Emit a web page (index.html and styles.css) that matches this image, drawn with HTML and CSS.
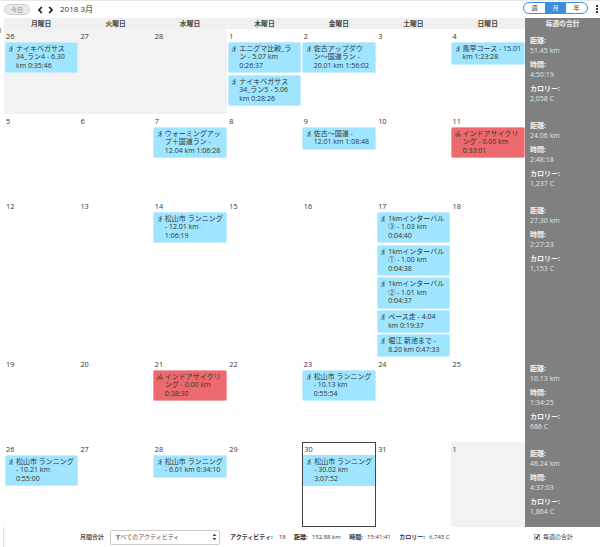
FILE: index.html
```html
<!DOCTYPE html>
<html lang="ja">
<head>
    <meta charset="UTF-8">
    <title>カレンダー</title>
    <link rel="stylesheet" href="styles.css">
</head>
<body>
    <div class="grip"></div>
    <div class="toolbar">
        <button class="today-btn">今日</button>
        <div class="nav">
            <svg width="6" height="8" viewBox="0 0 6 8"><path d="M4.800 1L2 4l2.800 3" fill="none" stroke="#222" stroke-width="1.800"/></svg>
            <svg width="6" height="8" viewBox="0 0 6 8"><path d="M1.200 1L4 4 1.200 7" fill="none" stroke="#222" stroke-width="1.800"/></svg>
        </div>
        <span class="month">2018 3月</span>
        <div class="views">
            <span>週</span>
            <span class="on">月</span>
            <span>年</span>
        </div>
        <div class="dots"><i></i><i></i><i></i></div>
    </div>

    <div class="calendar">
        <div class="week head">
            <div>月曜日</div><div>火曜日</div><div>水曜日</div><div>木曜日</div><div>金曜日</div><div>土曜日</div><div>日曜日</div>
            <div class="side-title">毎週の合計</div>
        </div>

        <div class="week">
            <div class="day off">26
                <div class="event run"><svg class="ico"><use href="#run"/></svg><p>ナイキベガサス<br>34_ラン4 - 6.30<br>km 0:35:46</p></div>
            </div>
            <div class="day off">27</div>
            <div class="day off">28</div>
            <div class="day">1
                <div class="event run"><svg class="ico"><use href="#run"/></svg><p>エニグマ比較_ラ<br>ン - 5.07 km<br>0:26:37</p></div>
                <div class="event run"><svg class="ico"><use href="#run"/></svg><p>ナイキベガサス<br>34_ラン5 - 5.06<br>km 0:28:26</p></div>
            </div>
            <div class="day">2
                <div class="event run"><svg class="ico"><use href="#run"/></svg><p>佐古アップダウ<br>ン〜国道ラン -<br>20.01 km 1:56:02</p></div>
            </div>
            <div class="day">3</div>
            <div class="day">4
                <div class="event run"><svg class="ico"><use href="#run"/></svg><p>風早コース - 15.01<br>km 1:23:28</p></div>
            </div>
            <div class="total">
                <b>距離:</b><span>51.45 km</span>
                <b>時間:</b><span>4:50:19</span>
                <b>カロリー:</b><span>2,058 C</span>
            </div>
        </div>

        <div class="week">
            <div class="day">5</div>
            <div class="day">6</div>
            <div class="day">7
                <div class="event run"><svg class="ico"><use href="#run"/></svg><p>ウォーミングアッ<br>プ＋国道ラン -<br>12.04 km 1:06:28</p></div>
            </div>
            <div class="day">8</div>
            <div class="day">9
                <div class="event run"><svg class="ico"><use href="#run"/></svg><p>佐古〜国道 -<br>12.01 km 1:08:48</p></div>
            </div>
            <div class="day">10</div>
            <div class="day">11
                <div class="event bike"><svg class="ico"><use href="#bike"/></svg><p>インドアサイクリ<br>ング - 0.00 km<br>0:33:01</p></div>
            </div>
            <div class="total">
                <b>距離:</b><span>24.06 km</span>
                <b>時間:</b><span>2:48:18</span>
                <b>カロリー:</b><span>1,237 C</span>
            </div>
        </div>

        <div class="week tall">
            <div class="day">12</div>
            <div class="day">13</div>
            <div class="day">14
                <div class="event run"><svg class="ico"><use href="#run"/></svg><p>松山市 ランニング<br>- 12.01 km<br>1:06:19</p></div>
            </div>
            <div class="day">15</div>
            <div class="day">16</div>
            <div class="day">17
                <div class="event run"><svg class="ico"><use href="#run"/></svg><p>1kmインターバル<br>③ - 1.03 km<br>0:04:40</p></div>
                <div class="event run"><svg class="ico"><use href="#run"/></svg><p>1kmインターバル<br>① - 1.00 km<br>0:04:38</p></div>
                <div class="event run"><svg class="ico"><use href="#run"/></svg><p>1kmインターバル<br>② - 1.01 km<br>0:04:37</p></div>
                <div class="event run"><svg class="ico"><use href="#run"/></svg><p>ペース走 - 4.04<br>km 0:19:37</p></div>
                <div class="event run"><svg class="ico"><use href="#run"/></svg><p>堀江 新池まで -<br>8.20 km 0:47:33</p></div>
            </div>
            <div class="day">18</div>
            <div class="total">
                <b>距離:</b><span>27.30 km</span>
                <b>時間:</b><span>2:27:23</span>
                <b>カロリー:</b><span>1,153 C</span>
            </div>
        </div>

        <div class="week">
            <div class="day">19</div>
            <div class="day">20</div>
            <div class="day">21
                <div class="event bike"><svg class="ico"><use href="#bike"/></svg><p>インドアサイクリ<br>ング - 0.00 km<br>0:38:30</p></div>
            </div>
            <div class="day">22</div>
            <div class="day">23
                <div class="event run"><svg class="ico"><use href="#run"/></svg><p>松山市 ランニング<br>- 10.13 km<br>0:55:54</p></div>
            </div>
            <div class="day">24</div>
            <div class="day">25</div>
            <div class="total">
                <b>距離:</b><span>10.13 km</span>
                <b>時間:</b><span>1:34:25</span>
                <b>カロリー:</b><span>686 C</span>
            </div>
        </div>

        <div class="week">
            <div class="day">26
                <div class="event run"><svg class="ico"><use href="#run"/></svg><p>松山市 ランニング<br>- 10.21 km<br>0:55:00</p></div>
            </div>
            <div class="day">27</div>
            <div class="day">28
                <div class="event run"><svg class="ico"><use href="#run"/></svg><p>松山市 ランニング<br>- 6.01 km 0:34:10</p></div>
            </div>
            <div class="day">29</div>
            <div class="day current">30
                <div class="event run"><svg class="ico"><use href="#run"/></svg><p>松山市 ランニング<br>- 30.02 km<br>3:07:52</p></div>
            </div>
            <div class="day">31</div>
            <div class="day off">1</div>
            <div class="total">
                <b>距離:</b><span>46.24 km</span>
                <b>時間:</b><span>4:37:03</span>
                <b>カロリー:</b><span>1,864 C</span>
            </div>
        </div>
    </div>

    <div class="footer">
        <span class="foot-label">月間合計</span>
        <div class="select">すべてのアクティビティ
            <svg width="5" height="8" viewBox="0 0 5 8"><path d="M.5 3l2-2.200L4.500 3zM.5 5l2 2.200L4.500 5z" fill="#444"/></svg>
        </div>
        <div class="stats">
            <b>アクティビティ:</b><span>18</span>
            <b>距離:</b><span>152.88 km</span>
            <b>時間:</b><span>15:41:41</span>
            <b>カロリー:</b><span>6,743 C</span>
        </div>
        <label class="check">
            <svg width="6" height="6" viewBox="0 0 6 6"><rect x=".5" y=".5" width="5" height="5" fill="#fff" stroke="#aaa"/><path d="M1.500 3l1.200 1.400L4.800 1" fill="none" stroke="#222" stroke-width="1.100"/></svg>
            毎週の合計
        </label>
    </div>

    <svg width="0" height="0" class="defs">
        <symbol id="run" viewBox="0 0 8 8">
            <circle cx="5.300" cy="1.100" r=".9" fill="#222"/>
            <path d="M1.800 3.200L3.600 2.400 5 3 4.300 5 5.400 6 5 7.800M4.800 3.300L6.200 4.200M4.100 5L3.200 6.200 1.200 7" fill="none" stroke="#222" stroke-width=".9"/>
        </symbol>
        <symbol id="bike" viewBox="0 0 8 8">
            <circle cx="5" cy="1.200" r=".8" fill="#333"/>
            <circle cx="1.800" cy="5.800" r="1.500" fill="none" stroke="#333" stroke-width=".7"/>
            <circle cx="6.200" cy="5.800" r="1.500" fill="none" stroke="#333" stroke-width=".7"/>
            <path d="M1.800 5.800L3.500 3 5 4.300 6.200 5.800M3.500 3L4.500 2" fill="none" stroke="#333" stroke-width=".8"/>
        </symbol>
    </svg>
</body>
</html>
```

FILE: styles.css
```css
* {
    box-sizing: border-box;
}

body {
    margin: 0;
    height: 547px;
    overflow: hidden;
    background: #fff;
    border-top: 1px solid #e8e8e8;
    font-family: 'Open Sans', 'Noto Sans CJK JP', sans-serif;
    font-size: 7px;
    line-height: 8.400px;
    color: #333;
}

.grip {
    position: absolute;
    left: 0;
    top: 28px;
    width: 1px;
    height: 5px;
    background: #aaa;
}

.toolbar {
    height: 17px;
    padding: 1px 0 0 4px;
    display: flex;
    align-items: flex-start;
}

.today-btn {
    width: 26px;
    height: 11px;
    margin-top: 2px;
    padding: 0;
    border: 1px solid #d0d0d0;
    border-radius: 6px;
    background: #e8e8e8;
    color: #888;
    font: 6px/8px 'Noto Sans CJK JP', sans-serif;
}

.nav {
    display: flex;
    gap: 5px;
    margin: 4px 0 0 7px;
}

.month {
    margin-left: 6px;
    font-size: 8px;
    line-height: 14px;
    color: #333;
}

.views {
    margin-left: auto;
    width: 65px;
    height: 12px;
    display: flex;
    border: 1px solid #3b8fdc;
    border-radius: 6px;
    overflow: hidden;
    font-size: 6px;
    line-height: 10px;
    text-align: center;
}

.views span {
    flex: 1;
}

.views .on {
    background: #3b8fdc;
    color: #fff;
}

.dots {
    width: 12px;
    padding: 3px 0 0 8px;
    display: flex;
    flex-direction: column;
    gap: 1px;
}

.dots i {
    width: 2px;
    height: 2px;
    background: #333;
}

.calendar {
    margin-left: 4px;
}

.week {
    display: grid;
    grid-template-columns: repeat(7, minmax(0, 1fr)) 75px;
    height: 85px;
}

.week.tall {
    height: 158px;
}

.week.head {
    height: 11px;
    background: #f0f0f0;
    font-size: 6.800px;
    font-weight: 700;
    text-align: center;
    line-height: 11px;
    color: #444;
}

.side-title {
    background: #808080;
    color: #eee;
}

.day {
    padding: 3px .5px 0;
    font-size: 7.300px;
    text-indent: 1.500px;
    line-height: 9px;
}

.day.off {
    background: #f2f2f2;
}

.day.current {
    border: 1px solid #444;
    padding: 2px 0 0;
}

.event {
    display: flex;
    margin-bottom: 1.500px;
    padding: 2px 1px 2px 2.500px;
    border: 1px solid #c4ecff;
    border-radius: 2px;
    background: #9fe5ff;
    font-size: 7px;
    line-height: 8.400px;
    text-indent: 0;
}

.day > .event:first-of-type {
    margin-top: 1px;
}

.current .event {
    border-radius: 0;
    border-color: #9fe5ff;
}

.event.bike {
    background: #ec6a6e;
    border-color: #f3a0a2;
}

.event p {
    margin: 0;
    white-space: nowrap;
}

.ico {
    flex: none;
    width: 6px;
    height: 6px;
    margin: 1px 2px 0 0;
}

.total {
    display: flex;
    flex-direction: column;
    padding: 7px 0 0 5px;
    background: #808080;
    color: #e4e4e4;
    line-height: 9.500px;
}

.total b {
    color: #f2f2f2;
}

.total span {
    margin-bottom: 5px;
}

.footer {
    height: 20px;
    margin-left: 3px;
    border-left: 1px solid #ddd;
    display: flex;
    align-items: center;
    font-size: 6px;
}

.foot-label {
    margin-left: 76px;
    font-weight: 700;
    color: #555;
}

.select {
    width: 110px;
    height: 15px;
    margin-left: 6px;
    padding: 0 2px 0 4px;
    display: flex;
    align-items: center;
    justify-content: space-between;
    border: 1px solid #ccc;
    border-radius: 2px;
    color: #555;
}

.stats {
    margin-left: 10px;
    display: flex;
    align-items: center;
    gap: 4px;
}

.stats b:first-child {
    margin-right: 2px;
}

.stats span {
    margin-right: 4.500px;
}

.check {
    margin-left: auto;
    margin-right: 27px;
    display: flex;
    align-items: center;
    gap: 3px;
    color: #444;
}

.defs {
    position: absolute;
}
```
